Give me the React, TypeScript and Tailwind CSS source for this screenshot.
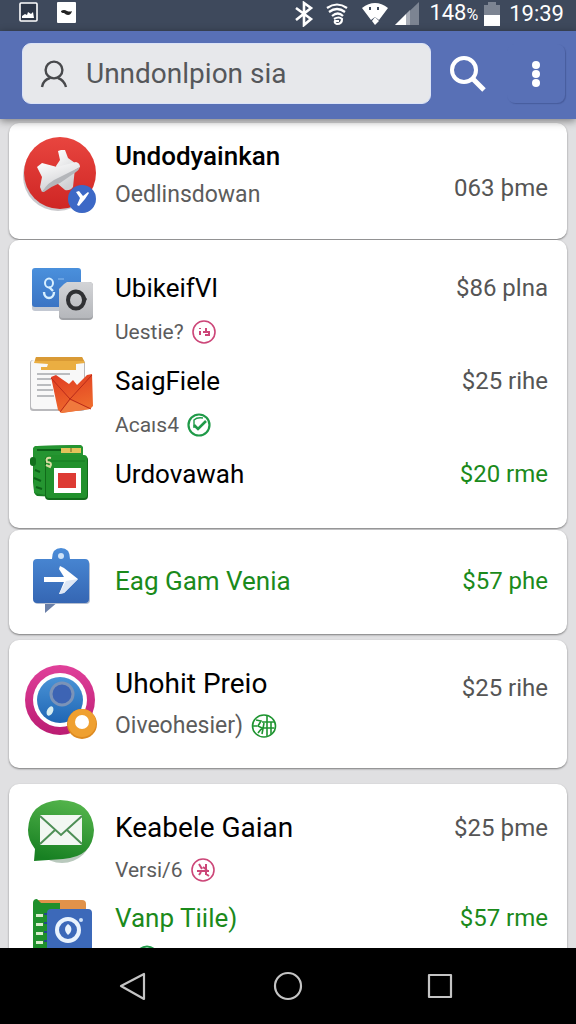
import type { ReactNode } from 'react'

interface Entry {
  title: string
  subtitle?: string
  price: string
  icon: ReactNode
  badge?: ReactNode
  green?: boolean
  greenPrice?: boolean
  // icon is centred on the whole row instead of on the title line
  tallIcon?: boolean
  titleClass?: string
  subtitleClass?: string
  priceClass?: string
}

interface Group {
  id: string
  className: string
  entries: Entry[]
}

function IconFrame({ children }: { children: ReactNode }) {
  return (
    <svg viewBox="0 0 76 100" className="-my-4 w-[76px] h-[100px] shrink-0" aria-hidden="true">
      {children}
    </svg>
  )
}

function PlaneIcon() {
  return (
    <IconFrame>
      <defs>
        <linearGradient id="plane-red" x1="0" y1="0" x2="0" y2="1">
          <stop offset="0" stopColor="#e8453f" />
          <stop offset="1" stopColor="#cf2624" />
        </linearGradient>
        <linearGradient id="plane-white" x1="0" y1="0" x2="0.4" y2="1">
          <stop offset="0" stopColor="#ffffff" />
          <stop offset="1" stopColor="#cfd0d3" />
        </linearGradient>
      </defs>
      <circle cx="36" cy="51" r="35" fill="#c9c9cd" />
      <circle cx="38" cy="48" r="36" fill="url(#plane-red)" />
      <path d="M36 26l3-1h4l3 8 7 5v5l-2 19q-3 4-8 3l-7-6-2-18 4-6z" fill="url(#plane-white)" />
      <path d="M15 42l5-4 15 4 19-5q4 1 4 5L36 55q-9 4-16 12l-2-5 2-10z" fill="url(#plane-white)" />
      <path d="M20 67q6-10 16-14l22-11q-1 3-4 5L38 58q-8 3-16 9z" fill="#b4b6ba" />
      <circle cx="60" cy="75" r="13" fill="#b9bcc8" />
      <circle cx="60" cy="74" r="14" fill="#3c68c6" />
      <path d="M54 67l3-1 4 5 5-4 1 1-4 6-6 7-2-1 3-7z" fill="#fff" />
    </IconFrame>
  )
}

function CardsIcon() {
  return (
    <IconFrame>
      <defs>
        <linearGradient id="cards-blue" x1="0" y1="0" x2="0" y2="1">
          <stop offset="0" stopColor="#4a90dc" />
          <stop offset="1" stopColor="#3b74c4" />
        </linearGradient>
        <linearGradient id="cards-gray" x1="0" y1="0" x2="0" y2="1">
          <stop offset="0" stopColor="#d3d4d7" />
          <stop offset="1" stopColor="#b5b7bb" />
        </linearGradient>
      </defs>
      <rect x="10" y="32" width="49" height="41" rx="3" fill="#c3c8d2" />
      <rect x="10" y="30" width="49" height="39" rx="3" fill="url(#cards-blue)" />
      <ellipse cx="27" cy="45" rx="4" ry="4.5" fill="none" stroke="#d8efff" strokeWidth="2" />
      <path d="M22 54c0 8 10 8 10 0M27 49l4 4" fill="none" stroke="#d8efff" strokeWidth="2.4" />
      <path d="M36 41h6" stroke="#8fbdee" />
      <path d="M42 48l4-4h21q4 0 4 4v30q0 4-4 4H41q-4 0-4-4V53z" fill="#9fa1a5" />
      <path d="M42 46l3-2h22q4 0 4 4v28q0 4-4 4H41q-4 0-4-4V51z" fill="url(#cards-gray)" />
      <ellipse cx="54" cy="62" rx="8" ry="8.5" fill="none" stroke="#303134" strokeWidth="4" />
      <path d="M61 56l4 5-3 6z" fill="#303134" />
    </IconFrame>
  )
}

function NoteIcon() {
  return (
    <IconFrame>
      <defs>
        <linearGradient id="note-red" x1="0" y1="0" x2="0.3" y2="1">
          <stop offset="0" stopColor="#e03a22" />
          <stop offset="1" stopColor="#ee6a2c" />
        </linearGradient>
      </defs>
      <rect x="8" y="29" width="55" height="51" rx="3" fill="#b9b9bc" />
      <rect x="9" y="29" width="53" height="49" rx="3" fill="#f8f8f8" />
      <path d="M14 26h46l3 6-9 1v6H19v-3h6l1-3-14-1z" fill="#eaae42" />
      <path d="M14 26h46l2 4H13z" fill="#d99a35" />
      <path d="M15 43h33M15 48h14M15 54h14M15 59h16M15 65h17" stroke="#7d8086" strokeWidth="1" />
      <path d="M29 46l5-2 13 9 4-4 4 5 10-10 5-1 1 32-3 3-28 4-4-3z" fill="url(#note-red)" />
      <path d="M48 69l20 9-30 4z" fill="#f0793d" />
      <path d="M29 47l19 21 22-24M38 81l10-13 21 10" fill="none" stroke="#b92a1a" strokeWidth="1" />
    </IconFrame>
  )
}

function WalletIcon() {
  return (
    <IconFrame>
      <path d="M11 26q0-4 4-4l42-1q4 0 4 4v46q0 3-4 3l-42-2q-3-2-3-5l-1-9z" fill="#177d22" />
      <path d="M11 26q0-4 4-4l42-1q4 0 4 4v8H24v38l-12-2z" fill="#259531" />
      <rect x="8" y="33" width="6" height="9" rx="3" fill="#12701d" />
      <path d="M13 46l5 2M12 54l7 3M14 63l6 2M15 26h25" stroke="#0c6118" strokeWidth="2" />
      <rect x="39" y="24" width="20" height="5" fill="#e4c35a" />
      <path d="M49 24v4" stroke="#6f6420" strokeWidth="1" />
      <rect x="23" y="32" width="43" height="44" rx="4" fill="#116b1a" />
      <rect x="24" y="31" width="41" height="43" rx="3" fill="#21912c" />
      <path d="M26 37h37" stroke="#167a20" strokeWidth="1" />
      <path d="M29 34q-6-1-4 4 6 0 3 5l-4-2" fill="none" stroke="#d8dba0" strokeWidth="2" />
      <rect x="32" y="44" width="27" height="25" fill="#fff" />
      <rect x="36" y="49" width="18" height="15" fill="#dd3b34" />
    </IconFrame>
  )
}

function TagIcon() {
  return (
    <IconFrame>
      <defs>
        <linearGradient id="tag-blue" x1="0" y1="0" x2="0" y2="1">
          <stop offset="0" stopColor="#4b8cd8" />
          <stop offset="1" stopColor="#3566b3" />
        </linearGradient>
      </defs>
      <path d="M23 70h14L23 82z" fill="#6a7fa8" />
      <rect x="12" y="30" width="56" height="43" rx="4" fill="#b4bed0" />
      <path d="M30 28q0-11 9-11t9 11h15q4 0 4 4v36q0 4-4 4H15q-4 0-4-4V32q0-4 4-4z" fill="url(#tag-blue)" />
      <circle cx="39" cy="25" r="3" fill="#cfe3f8" />
      <path d="M22 46h20l-5-8 1-3 4 2 14 11-14 14-5 1 5-12H22z" fill="#fff" />
      <path d="M44 50l12-2-14 14-5 1z" fill="#dfe8f5" />
    </IconFrame>
  )
}

function LensIcon() {
  return (
    <IconFrame>
      <defs>
        <linearGradient id="lens-pink" x1="0" y1="0" x2="0" y2="1">
          <stop offset="0" stopColor="#e0409a" />
          <stop offset="1" stopColor="#bb1c72" />
        </linearGradient>
        <linearGradient id="lens-blue" x1="0" y1="0" x2="0" y2="1">
          <stop offset="0" stopColor="#4a93d6" />
          <stop offset="1" stopColor="#1f66b4" />
        </linearGradient>
      </defs>
      <circle cx="38" cy="46" r="35" fill="url(#lens-pink)" />
      <circle cx="38" cy="46" r="27" fill="#fff" />
      <circle cx="38" cy="46" r="23" fill="url(#lens-blue)" />
      <circle cx="40" cy="40" r="11" fill="#3d64b4" stroke="#7b93b8" strokeWidth="3" />
      <ellipse cx="28" cy="57" rx="3" ry="5" fill="#d6edf0" transform="rotate(25 28 57)" />
      <circle cx="60" cy="70" r="15" fill="#dd8a20" />
      <circle cx="60" cy="69" r="14" fill="#efa030" />
      <circle cx="60" cy="68" r="7" fill="#fff" />
    </IconFrame>
  )
}

function MailIcon() {
  return (
    <IconFrame>
      <defs>
        <linearGradient id="mail-green" x1="0.7" y1="0" x2="0.4" y2="1">
          <stop offset="0" stopColor="#55b54c" />
          <stop offset="1" stopColor="#178022" />
        </linearGradient>
      </defs>
      <ellipse cx="40" cy="56" rx="30" ry="29" fill="#b9c9bd" />
      <path d="M12 83l1-12Q6 62 6 52 7 24 38 22q32 1 34 30-1 27-31 29z" fill="url(#mail-green)" />
      <rect x="18" y="37" width="42" height="30" rx="1" fill="#f2f7f2" />
      <path d="M18 38l21 19 21-19M18 66l15-14M60 66L45 52" fill="none" stroke="#4e8f56" strokeWidth="2" />
    </IconFrame>
  )
}

function NotebookIcon() {
  return (
    <IconFrame>
      <path d="M12 32h48q4 0 4 4v50H12z" fill="#e1924a" />
      <path d="M11 35q0-4 4-4l4 4h19v6h10v60H11z" fill="#1f8f2b" />
      <rect x="25" y="41" width="45" height="62" rx="4" fill="#3c69b9" />
      <path d="M14 46h7v3h-7zM14 55h7v3h-7zM14 64h7v3h-7zM14 73h7v3h-7z" fill="#d8eccb" />
      <path d="M25 46h-3M25 55h-3M25 64h-3M25 73h-3" stroke="#24478a" strokeWidth="2" />
      <circle cx="46" cy="62" r="11" fill="none" stroke="#e9f3fd" strokeWidth="4" />
      <path d="M46 56c5 3 4 8 0 11-4-4-4-8 0-11z" fill="#e9f3fd" />
      <circle cx="59" cy="52" r="2" fill="#cfe2f8" />
    </IconFrame>
  )
}

function PinkBadge({ solid = false }: { solid?: boolean }) {
  return (
    <svg viewBox="0 0 24 24" className="size-6 shrink-0" fill="none" stroke="#cc4678" strokeWidth="2" aria-hidden="true">
      <circle cx="12" cy="12" r="11" strokeWidth="1.6" />
      {solid ? (
        <path d="M8 6l3 5M6 13h12M15 6v11M12 9l4 3M8 17l2-3M15 16l3 2" />
      ) : (
        <path d="M8 8v1M8 11v4M11 12h2M14 8v4h3v4M13 15h3" />
      )}
    </svg>
  )
}

function CheckBadge() {
  return (
    <svg viewBox="0 0 24 24" className="size-6 shrink-0" fill="none" stroke="#1f9a48" aria-hidden="true">
      <circle cx="12" cy="12" r="10.5" strokeWidth="2.2" />
      <path d="M7 12l4 4 8-8" strokeWidth="2.6" />
      <path d="M7 15V7q3-3 9-2" strokeWidth="1.4" />
    </svg>
  )
}

function GlobeBadge() {
  return (
    <svg viewBox="0 0 26 24" className="w-[26px] h-6 shrink-0" fill="none" stroke="#1e9430" strokeWidth="1.6" aria-hidden="true">
      <ellipse cx="13" cy="12" rx="11.5" ry="11" />
      <path d="M5 6l5 1-3 5 4 2-4 5M1 12h5M16 2v20M11 8h12M12 14h11M20 8v12M13 9l-2 11" />
    </svg>
  )
}

const groups: Group[] = [
  {
    id: 'top',
    className: 'pt-[15px] pb-7',
    entries: [
      {
        title: 'Undodyainkan',
        subtitle: 'Oedlinsdowan',
        price: '063 þme',
        icon: <PlaneIcon />,
        tallIcon: true,
        titleClass: 'text-[26px] font-medium',
        subtitleClass: 'mt-[5px] text-[23px]',
        priceClass: 'pt-8'
      }
    ]
  },
  {
    id: 'accounts',
    className: 'mt-px pt-[30px] pb-9 gap-[15px]',
    entries: [
      {
        title: 'UbikeifVl',
        subtitle: 'Uestie?',
        price: '$86 plna',
        icon: <CardsIcon />,
        badge: <PinkBadge />,
        titleClass: 'text-[26px]',
        subtitleClass: 'mt-[10px] text-[21px]'
      },
      {
        title: 'SaigFiele',
        subtitle: 'Acaıs4',
        price: '$25 rihe',
        icon: <NoteIcon />,
        badge: <CheckBadge />,
        titleClass: 'text-[26px]',
        subtitleClass: 'mt-[10px] text-[21px]'
      },
      {
        title: 'Urdovawah',
        price: '$20 rme',
        icon: <WalletIcon />,
        greenPrice: true,
        titleClass: 'text-[26px]'
      }
    ]
  },
  {
    id: 'venia',
    className: 'mt-[2px] pt-[33px] pb-[35px]',
    entries: [
      {
        title: 'Eag Gam Venia',
        price: '$57 phe',
        icon: <TagIcon />,
        green: true,
        greenPrice: true,
        titleClass: 'text-[26px]'
      }
    ]
  },
  {
    id: 'preio',
    className: 'mt-[6px] pt-[26px] pb-[26px]',
    entries: [
      {
        title: 'Uhohit Preio',
        subtitle: 'Oiveohesier)',
        price: '$25 rihe',
        icon: <LensIcon />,
        badge: <GlobeBadge />,
        tallIcon: true,
        titleClass: 'text-[28px]',
        subtitleClass: 'mt-2 text-[23px]',
        priceClass: 'pt-1'
      }
    ]
  },
  {
    id: 'gaian',
    className: 'mt-4 pt-[26px] pb-[26px] gap-[14px]',
    entries: [
      {
        title: 'Keabele Gaian',
        subtitle: 'Versi/6',
        price: '$25 þme',
        icon: <MailIcon />,
        badge: <PinkBadge solid />,
        titleClass: 'text-[28px]',
        subtitleClass: 'mt-2 text-[21px]'
      },
      {
        title: 'Vanp Tiile)',
        price: '$57 rme',
        icon: <NotebookIcon />,
        badge: <CheckBadge />,
        green: true,
        greenPrice: true,
        titleClass: 'text-[26px]',
        subtitleClass: 'mt-[5px] pl-5'
      }
    ]
  }
]

function EntryRow({ entry }: { entry: Entry }) {
  return (
    <li className="flex items-start">
      <div className={`flex w-[76px] shrink-0 items-center justify-center ${entry.tallIcon ? 'self-stretch' : 'h-9'}`}>
        {entry.icon}
      </div>
      <div className="ml-[17px] min-w-0 flex-1">
        <h2
          className={`h-9 whitespace-nowrap leading-9 ${entry.green ? 'text-[#1b8a1b]' : 'text-black'} ${entry.titleClass ?? ''}`}
        >
          {entry.title}
        </h2>
        {(entry.subtitle || entry.badge) && (
          <p className={`flex h-8 items-center gap-2 whitespace-nowrap leading-8 text-[#5c5c5c] ${entry.subtitleClass ?? ''}`}>
            {entry.subtitle && <span>{entry.subtitle}</span>}
            {entry.badge}
          </p>
        )}
      </div>
      <span
        className={`shrink-0 whitespace-nowrap text-[24px] leading-9 ${entry.greenPrice ? 'text-[#1b8a1b]' : 'text-[#555555]'} ${entry.priceClass ?? ''}`}
      >
        {entry.price}
      </span>
    </li>
  )
}

function StatusBar() {
  return (
    <div className="flex h-[31px] shrink-0 items-start justify-between bg-[#3e495c] pt-px pr-3 pl-[19px] text-white">
      <div className="flex items-center gap-[18px]">
        <svg viewBox="0 0 20 22" className="h-[22px] w-5" aria-hidden="true">
          <rect x="1" y="2" width="17" height="18" rx="1" fill="#2d3646" stroke="#fff" strokeWidth="1.6" />
          <path d="M3 17v-2l3-2 2 1 1-3 3 2 2-2 1 6z" fill="#fff" />
        </svg>
        <svg viewBox="0 0 20 22" className="h-[22px] w-5" aria-hidden="true">
          <rect width="19" height="21" x="0" y="1" rx="1" fill="#fff" />
          <path d="M4 10q3-2 6 0 3 1 5 0-1 4-4 4-2 0-4-2-3 0-3-2z" fill="#222" />
        </svg>
      </div>
      <div className="flex items-center">
        <svg viewBox="0 0 20 26" className="h-[26px] w-5" fill="none" stroke="#fff" strokeWidth="2.6" aria-hidden="true">
          <path d="M2 7l15 11-7 6V2l7 5L2 19" />
        </svg>
        <svg viewBox="0 0 22 24" className="ml-3 h-6 w-[22px]" fill="none" stroke="#fff" strokeWidth="2.2" aria-hidden="true">
          <path d="M1 6q10-7 20 0M3 10q8-6 16 0M6 14q6-5 11 0" />
          <path d="M8 17q5-3 8 0 0 5-5 5-3-1-2-3h4" />
        </svg>
        <svg viewBox="0 0 28 24" className="ml-[13px] h-6 w-7" aria-hidden="true">
          <path d="M1 6Q14-4 27 6l-9 12-4-3-4 3z" fill="#fff" />
          <path d="M14 15l4 4-4 4-3-4z" fill="#fff" />
          <path d="M9 5v3M17 5v3" stroke="#3e495c" strokeWidth="2" />
        </svg>
        <svg viewBox="0 0 25 24" className="ml-[6px] h-6 w-[25px]" aria-hidden="true">
          <path d="M24 0v23H0z" fill="#7c8492" />
          <path d="M11 12v11H0z" fill="#fff" />
          <path d="M11 12l4-4v15h-4z" fill="#a8adb7" />
        </svg>
        <span className="ml-[9px] text-[22px] leading-6">
          148<span className="text-[16px]">%</span>
        </span>
        <svg viewBox="0 0 16 24" className="ml-[6px] h-6 w-4" aria-hidden="true">
          <path d="M4 0h8v3h4v10H0V3h4z" fill="#7c8492" />
          <path d="M0 13h16v11H0z" fill="#fff" />
        </svg>
        <time className="ml-[9px] text-[22px] leading-6">19:39</time>
      </div>
    </div>
  )
}

function SearchHeader() {
  return (
    <header className="relative z-10 flex h-[88px] shrink-0 items-center bg-[#5870b6] pr-[11px] pb-[3px] pl-[22px] shadow-[0_2px_8px_rgba(0,0,0,0.45)]">
      <label className="flex h-[61px] min-w-0 flex-1 items-center rounded-[9px] border border-[#dbe3f7] bg-[#e7e8eb] pl-[17px]">
        <svg viewBox="0 0 28 28" className="size-7 shrink-0" fill="none" stroke="#48494c" strokeWidth="2.4" aria-hidden="true">
          <circle cx="14" cy="10" r="8.4" />
          <path d="M2 27q1-7 8-9M26 27q-2-7-8-9" />
        </svg>
        <input
          type="text"
          aria-label="Search"
          defaultValue="Unndonlpion sia"
          className="ml-[18px] w-full min-w-0 bg-transparent text-[28px] text-[#55575a] outline-none"
        />
      </label>
      <button type="button" aria-label="Search" className="ml-[19px] shrink-0">
        <svg viewBox="0 0 38 38" className="size-[38px]" fill="none" stroke="#fff" aria-hidden="true">
          <circle cx="14" cy="15" r="12" strokeWidth="4" />
          <path d="M22 23l12 12" strokeWidth="5" />
        </svg>
      </button>
      <button
        type="button"
        aria-label="More options"
        className="ml-[19px] flex h-[59px] w-[58px] shrink-0 items-center justify-center rounded-[8px] shadow-[1px_1px_1px_rgba(40,55,110,0.35)]"
      >
        <svg viewBox="0 0 10 28" className="h-7 w-[10px]" fill="#fff" aria-hidden="true">
          <circle cx="5" cy="5" r="4" />
          <circle cx="5" cy="14" r="4" />
          <circle cx="5" cy="23" r="4" />
        </svg>
      </button>
    </header>
  )
}

function NavBar() {
  return (
    <nav className="flex h-[76px] shrink-0 items-center justify-center gap-[116px] bg-black">
      <button type="button" aria-label="Back">
        <svg viewBox="0 0 36 30" className="h-[30px] w-9" fill="none" stroke="#c4c4c4" strokeWidth="2.2" strokeLinejoin="round" aria-hidden="true">
          <path d="M26 3v25L3 15z" />
        </svg>
      </button>
      <button type="button" aria-label="Home">
        <svg viewBox="0 0 36 30" className="h-[30px] w-9" fill="none" stroke="#c4c4c4" strokeWidth="2.2" aria-hidden="true">
          <circle cx="18" cy="15" r="13" />
        </svg>
      </button>
      <button type="button" aria-label="Recent apps">
        <svg viewBox="0 0 36 30" className="h-[30px] w-9" fill="none" stroke="#c4c4c4" strokeWidth="2.2" strokeLinejoin="round" aria-hidden="true">
          <rect x="7" y="4" width="22" height="22" />
        </svg>
      </button>
    </nav>
  )
}

export default function App() {
  return (
    <div className="flex h-screen flex-col bg-[#e0e0e2] font-[Roboto,'Liberation_Sans',sans-serif]">
      <StatusBar />
      <SearchHeader />
      <main className="min-h-0 flex-1 overflow-hidden px-[9px] pt-1">
        {groups.map((group) => (
          <ul
            key={group.id}
            className={`flex flex-col rounded-[10px] bg-white pr-[19px] pl-[13px] shadow-[0_1px_2px_rgba(0,0,0,0.45)] ${group.className}`}
          >
            {group.entries.map((entry) => (
              <EntryRow key={entry.title} entry={entry} />
            ))}
          </ul>
        ))}
      </main>
      <NavBar />
    </div>
  )
}
